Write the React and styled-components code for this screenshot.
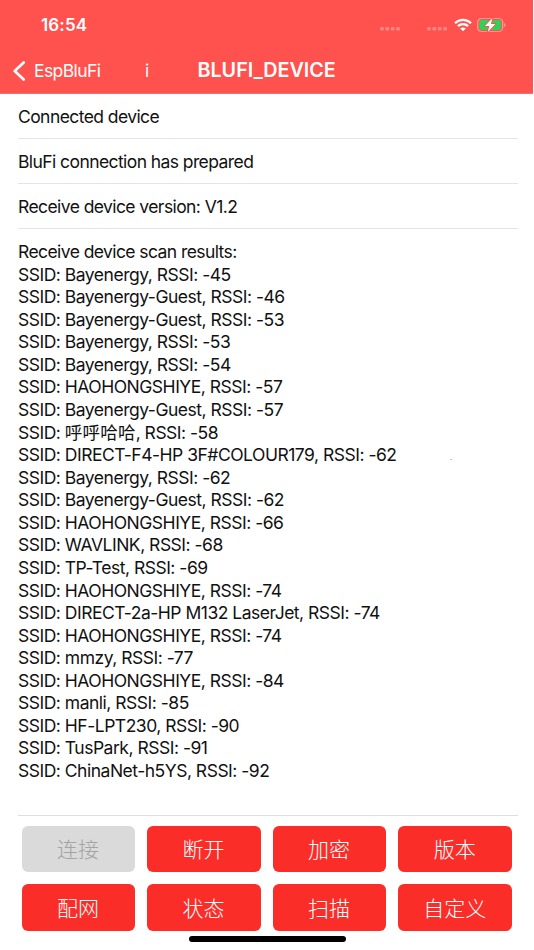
import React from "react";
import styled, { createGlobalStyle } from "styled-components";

const GlobalStyle = createGlobalStyle`
  * { box-sizing: border-box; }
  body { margin: 0; background: #fff; overflow: hidden; }
`;

const Screen = styled.div`
  position: relative;
  width: 534px;
  height: 950px;
  display: flex;
  flex-direction: column;
  background: #fff;
  color: #111;
  font-family: Inter, "Noto Sans CJK SC", sans-serif;
`;

const Header = styled.header`
  width: 533px;
  height: 94px;
  flex: none;
  background: #ff514d;
  border-bottom: 1px solid #f0706c;
  color: #fff;
`;

const StatusBar = styled.div`
  height: 50px;
  padding: 0 27px 0 41px;
  display: flex;
  align-items: center;
  justify-content: space-between;
`;

const Clock = styled.span`
  font-size: 17px;
  font-weight: 600;
  line-height: 20px;
  letter-spacing: 0.15px;
`;

const StatusIcons = styled.div`
  display: flex;
  align-items: center;
`;

const NavBar = styled.nav`
  height: 42px;
  padding-left: 13px;
  display: flex;
  align-items: center;
`;

const BackLabel = styled.span`
  width: 111px;
  margin-left: 8px;
  font-size: 17.5px;
  line-height: 24px;
  letter-spacing: -0.58px;
`;

const InfoLabel = styled.span`
  width: 52.5px;
  font-size: 17.5px;
  line-height: 24px;
`;

const Title = styled.h1`
  margin: 0;
  font-size: 19.8px;
  font-weight: 600;
  line-height: 24px;
  letter-spacing: -0.05px;
  margin-top: -2px;
`;

const Log = styled.main`
  height: 721.5px;
  flex: none;
  margin: 0 16px 0 18px;
  border-bottom: 1px solid #dedede;
`;

const Message = styled.div`
  height: 45.1px;
  padding-top: 11.5px;
  border-bottom: 1px solid #e4e4e4;
`;

const Results = styled.div`
  padding-top: 11.8px;
`;

const Line = styled.div`
  height: 22.57px;
  font-size: 17.5px;
  line-height: 22.57px;
  letter-spacing: ${(p) => (p.$network ? "-0.49px" : "-0.58px")};
  white-space: pre;
`;

const HanName = styled.span`
  letter-spacing: 0.2px;
`;

const Actions = styled.footer`
  padding: 10px 21.6px 0;
  display: grid;
  grid-template-columns: repeat(4, 113.6px);
  grid-auto-rows: 46.7px;
  gap: 12px;
`;

const ActionButton = styled.button`
  border: 0;
  padding: 0 1px 1px 0;
  border-radius: 6px;
  background: ${(p) => (p.disabled ? "#dadada" : "#fa2d28")};
  color: ${(p) => (p.disabled ? "#a3a3a3" : "#fff")};
  font-family: "Noto Sans CJK SC", sans-serif;
  font-weight: 300;
  font-size: 21px;
  line-height: 30px;
`;

const HomeIndicator = styled.div`
  position: absolute;
  left: 189px;
  top: 936px;
  width: 156.5px;
  height: 5.6px;
  border-radius: 3px;
  background: #000;
`;

const Speck = styled.div`
  position: absolute;
  left: 450px;
  top: 459px;
  width: 2px;
  height: 1px;
  background: #c4c4c4;
`;

const SignalDots = () => (
  <svg width="21" height="4" viewBox="0 0 21 4" fill="#ff8784">
    {[0, 5.4, 10.8, 16.2].map((x) => (
      <rect key={x} x={x} y="0" width="3.8" height="3.6" rx="1" />
    ))}
  </svg>
);

const DotGroup = styled.span`
  display: flex;
  margin: 8px ${(p) => p.$gap} 0 0;
`;

const Wifi = () => (
  <svg width="18" height="14" viewBox="0 0 18 14" fill="none" stroke="#fff" strokeWidth="2.3">
    <path d="M1 5.2C5.5.8 12.5.8 17 5.2" />
    <path d="M3.9 8.2C6.8 5.5 11.2 5.5 14.1 8.2" />
    <path d="M9 13.2L6.2 10.5Q9 8.3 11.8 10.5Z" fill="#fff" stroke="none" />
  </svg>
);

const Battery = () => (
  <svg width="29" height="16" viewBox="0 0 29 16">
    <rect x=".7" y="1.5" width="25" height="13" rx="4" fill="none" stroke="#ff9c99" strokeWidth="1.2" />
    <rect x="2.3" y="3.1" width="21.8" height="9.8" rx="2.2" fill="#30d158" />
    <path d="M27 6Q28.5 6.500 28.5 8T27 10Z" fill="#ff9c99" />
    <path d="M15.5 1L8 9H12.3L10.8 15L18.3 7H13.9Z" fill="#fff" stroke="#ff514d" strokeWidth="1.8" paintOrder="stroke" strokeLinejoin="round" />
  </svg>
);

const BatterySlot = styled.span`
  display: flex;
  margin-left: 5.5px;
`;

const BackChevron = () => (
  <svg width="13" height="20" viewBox="0 0 13 20" fill="none" stroke="#fff" strokeWidth="2.6" strokeLinecap="round" strokeLinejoin="round">
    <path d="M10.7 1.500L1.700 10L10.700 18.500" />
  </svg>
);

const messages = [
  "Connected device",
  "BluFi connection has prepared",
  "Receive device version: V1.2",
];

const networks = [
  ["Bayenergy", -45],
  ["Bayenergy-Guest", -46],
  ["Bayenergy-Guest", -53],
  ["Bayenergy", -53],
  ["Bayenergy", -54],
  ["HAOHONGSHIYE", -57],
  ["Bayenergy-Guest", -57],
  ["呼呼哈哈", -58],
  ["DIRECT-F4-HP 3F#COLOUR179", -62],
  ["Bayenergy", -62],
  ["Bayenergy-Guest", -62],
  ["HAOHONGSHIYE", -66],
  ["WAVLINK", -68],
  ["TP-Test", -69],
  ["HAOHONGSHIYE", -74],
  ["DIRECT-2a-HP M132 LaserJet", -74],
  ["HAOHONGSHIYE", -74],
  ["mmzy", -77],
  ["HAOHONGSHIYE", -84],
  ["manli", -85],
  ["HF-LPT230", -90],
  ["TusPark", -91],
  ["ChinaNet-h5YS", -92],
];

const isHan = (text) => /[\u4e00-\u9fff]/.test(text);

const actions = ["连接", "断开", "加密", "版本", "配网", "状态", "扫描", "自定义"];

export default function App() {
  return (
    <Screen>
      <GlobalStyle />
      <Header>
        <StatusBar>
          <Clock>16:54</Clock>
          <StatusIcons>
            <DotGroup $gap="26px"><SignalDots /></DotGroup>
            <DotGroup $gap="5.5px"><SignalDots /></DotGroup>
            <Wifi />
            <BatterySlot><Battery /></BatterySlot>
          </StatusIcons>
        </StatusBar>
        <NavBar>
          <BackChevron />
          <BackLabel>EspBluFi</BackLabel>
          <InfoLabel>i</InfoLabel>
          <Title>BLUFI_DEVICE</Title>
        </NavBar>
      </Header>
      <Log>
        {messages.map((text) => (
          <Message key={text}><Line>{text}</Line></Message>
        ))}
        <Results>
          <Line>Receive device scan results:</Line>
          {networks.map(([ssid, rssi], i) => (
            <Line key={i} $network>
              {"SSID: "}
              {isHan(ssid) ? <HanName>{ssid}</HanName> : ssid}
              {`, RSSI: ${rssi}`}
            </Line>
          ))}
        </Results>
      </Log>
      <Actions>
        {actions.map((label, i) => (
          <ActionButton key={label} disabled={i === 0}>{label}</ActionButton>
        ))}
      </Actions>
      <HomeIndicator />
      <Speck />
    </Screen>
  );
}
